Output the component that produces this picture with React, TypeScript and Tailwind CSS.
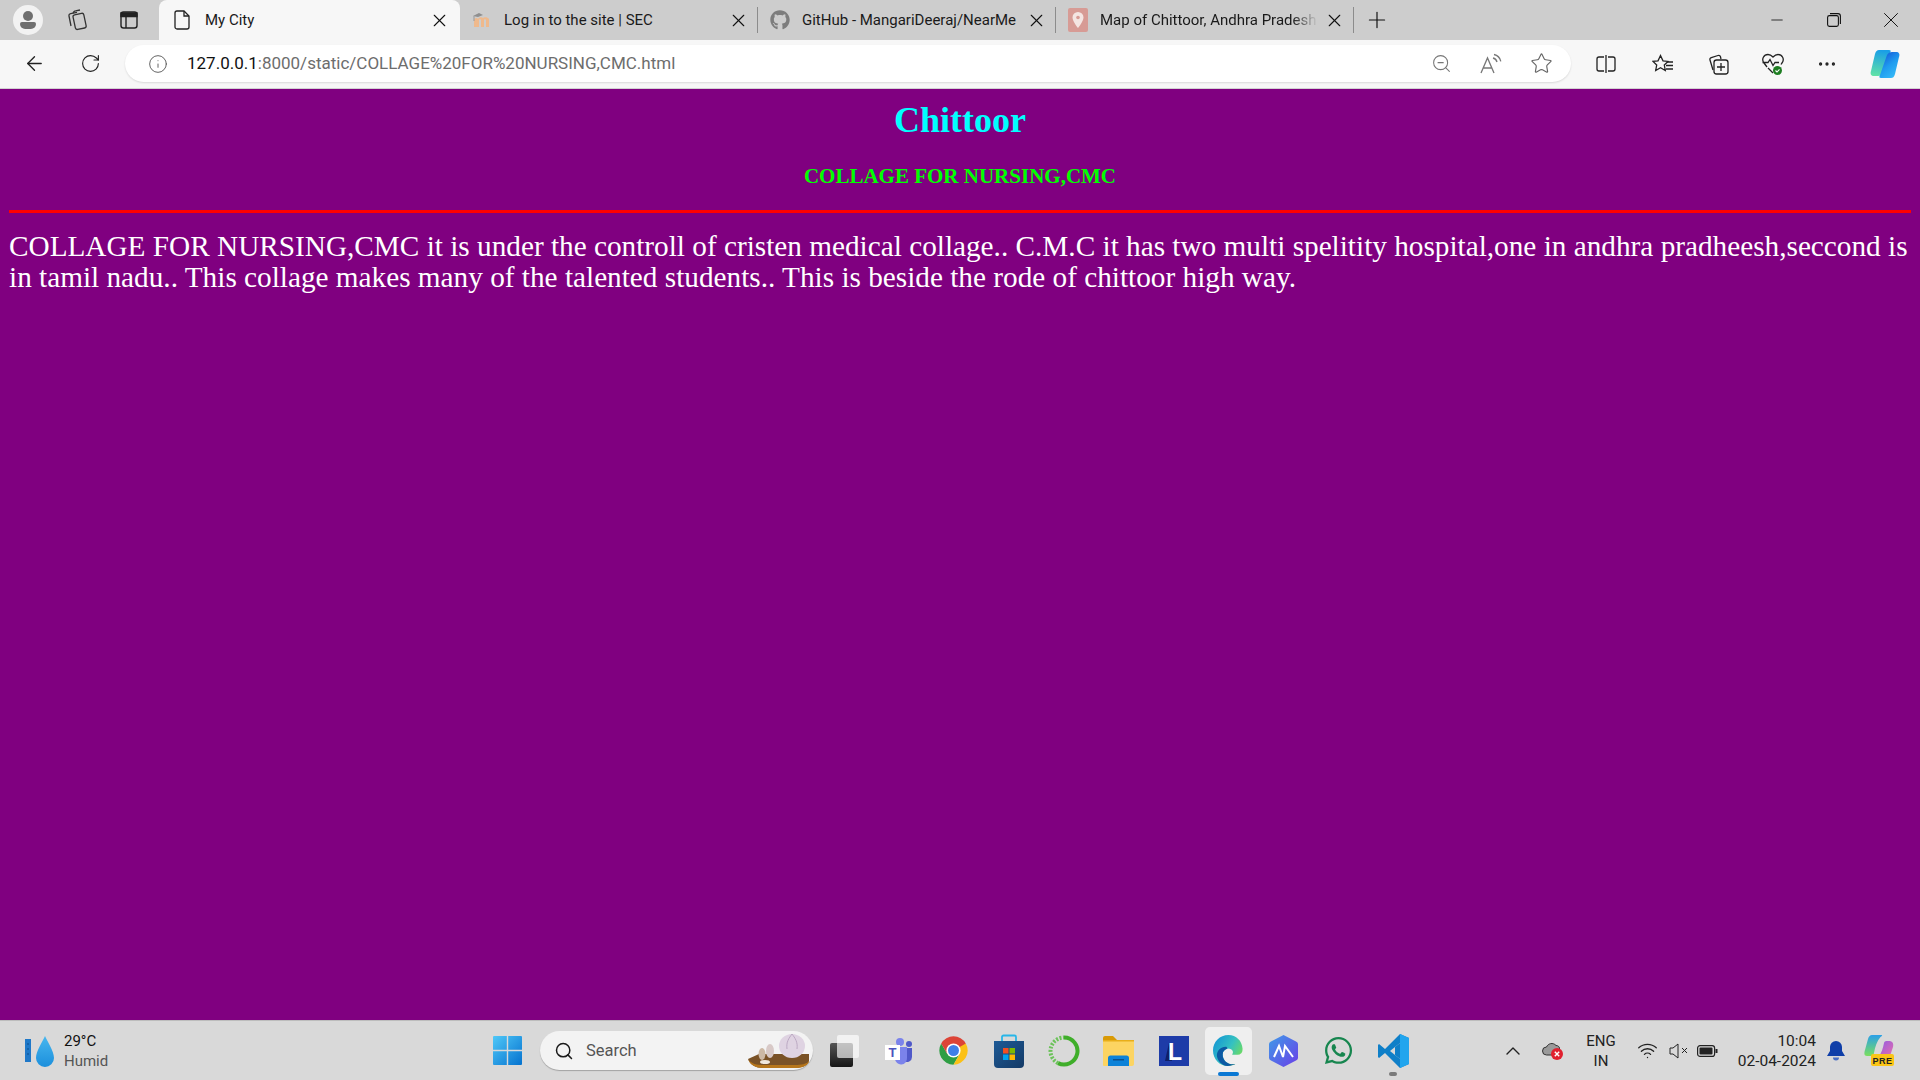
import React from "react";
import { FaGithub, FaWhatsapp } from "react-icons/fa";
import {
  ArrowLeft, RotateCw, Info, ZoomOut, Star, X, Plus, Minus, MoreHorizontal, ChevronUp, Wifi, Search,
} from "lucide-react";

const ui = "font-['Roboto',sans-serif]";

function Workspaces() {
  return (
    <svg width="22" height="24" viewBox="0 0 22 24" fill="none" stroke="#333" strokeWidth="1.3">
      <rect x="8" y="6" width="11" height="15" rx="2" transform="rotate(-12 13 13)" />
      <path d="M5 18 3 8a2 2 0 0 1 1.6-2.4L11 4.4" />
      <path d="M7 5 8 3.6a2 2 0 0 1 1.5-.8L14 2" />
    </svg>
  );
}
function VerticalTabs() {
  return (
    <svg width="20" height="20" viewBox="0 0 20 20" fill="none" stroke="#222" strokeWidth="1.4">
      <rect x="2" y="2" width="16" height="16" rx="2.5" />
      <path d="M2 3h16v3.5H2z" fill="#222" />
      <path d="M7 6v12" />
    </svg>
  );
}
function PageIcon() {
  return (
    <svg width="17" height="20" viewBox="0 0 17 20" fill="none" stroke="#222" strokeWidth="1.3">
      <path d="M3 1h7l5 5v11a2 2 0 0 1-2 2H3a2 2 0 0 1-2-2V3a2 2 0 0 1 2-2Z" />
      <path d="M10 1v5h5" />
    </svg>
  );
}
function Moodle() {
  return (
    <svg width="20" height="18" viewBox="0 0 20 18" fill="none">
      <path d="M2 16V9c0-2 3-3 4-1 1-2 4-2 5-1 1-1 5-1 6 1v8h-3V9c0-1-2-1-2 0v7h-3V9c0-1-2-1-2 0v7H2Z" fill="#efb98c" />
      <path d="M1 5 7 2l4 2-5 2Z" fill="#8f8f8f" />
      <path d="M2 5v5" stroke="#999" />
    </svg>
  );
}
function MapPin() {
  return (
    <svg width="20" height="24" viewBox="0 0 20 24">
      <rect width="20" height="24" rx="2" fill="#d79b95" />
      <path d="M10 4a5.5 5.5 0 0 0-5.5 5.5C4.500 13.500 10 20 10 20s5.500-6.500 5.500-10.500A5.500 5.500 0 0 0 10 4Z" fill="#f4e5e2" />
      <circle cx="10" cy="9.500" r="1.800" fill="#d79b95" />
    </svg>
  );
}
function ReadAloud() {
  return (
    <svg width="24" height="22" viewBox="0 0 24 22" fill="none" stroke="#777" strokeWidth="1.300">
      <path d="M2 20 8.500 5 15 20M4.500 15h8" />
      <path d="M14 5c2 .5 3.500 2 4 4M15 1.500c3.500.8 6 3.300 6.800 6.800" />
    </svg>
  );
}
function SplitScreen() {
  return (
    <svg width="20" height="20" viewBox="0 0 20 20" fill="none" stroke="#222" strokeWidth="1.300">
      <path d="M8 3H3a2 2 0 0 0-2 2v10a2 2 0 0 0 2 2h5M12 3h5a2 2 0 0 1 2 2v10a2 2 0 0 1-2 2h-5" />
      <path d="M10 1v18" />
    </svg>
  );
}
function Favorites() {
  return (
    <svg width="22" height="20" viewBox="0 0 22 20" fill="none" stroke="#222" strokeWidth="1.300">
      <path d="M8.500 1.500 11 6.800l5 .6-3.700 3.600 1 5.500-4.800-2.700-4.800 2.700 1-5.500L1 7.400l5-.6Z" />
      <path d="M15 8h6M14 11.500h7M14 15h7" />
    </svg>
  );
}
function Collections() {
  return (
    <svg width="21" height="22" viewBox="0 0 21 22" fill="none" stroke="#222" strokeWidth="1.300">
      <path d="M5 17 2 7a2 2 0 0 1 1.300-2.400L10 2.500a2 2 0 0 1 2.500 1.300L13 6" />
      <rect x="6" y="7" width="14" height="14" rx="2.500" />
      <path d="M13 10v8M9 14h8" />
    </svg>
  );
}
function Health() {
  return (
    <svg width="24" height="24" viewBox="0 0 24 24" fill="none">
      <path d="M6 15 3 11C0 7 3 2.500 7 2.500c2 0 3.500 1 5 2.500 1.500-1.500 3-2.500 5-2.500 4 0 7 4.500 4 8.500l-1 1.500M1.500 10.500H7l2-3 3 6 2-3h4M7 16l5 5" stroke="#222" strokeWidth="1.300" />
      <circle cx="16.500" cy="18.500" r="4.500" fill="#1e7d22" />
      <path d="m14.500 18.500 1.500 1.500 2.500-2.700" stroke="#fff" strokeWidth="1.100" />
    </svg>
  );
}
function Copilot() {
  return (
    <svg width="30" height="28" viewBox="0 0 30 28">
      <defs>
        <linearGradient id="cpa" x1="0.300" y1="0" x2="0.200" y2="1">
          <stop offset="0" stopColor="#1a9fe6" />
          <stop offset="1" stopColor="#62e3a6" />
        </linearGradient>
        <linearGradient id="cpb" x1="0.200" y1="0" x2="0.800" y2="1">
          <stop offset="0" stopColor="#1556d8" />
          <stop offset="0.500" stopColor="#1f9bef" />
          <stop offset="1" stopColor="#38bdf8" />
        </linearGradient>
      </defs>
      <path d="M9 0h10c2 0 2 1 1 3l-7 20c-1 2-3 3-5 3H4c-3 0-4-2-3-5L5 4c1-3 2-4 4-4Z" fill="url(#cpa)" />
      <path d="M21 28H11c-2 0-2-1-1-3l7-20c1-2 3-3 5-3h4c3 0 4 2 3 5l-4 17c-1 3-2 4-4 4Z" fill="url(#cpb)" />
    </svg>
  );
}
function WeatherIcon() {
  return (
    <svg width="30" height="32" viewBox="0 0 30 32">
      <defs>
        <linearGradient id="drop" x1="0" y1="0" x2="0" y2="1">
          <stop offset="0" stopColor="#47b7ef" />
          <stop offset="1" stopColor="#1c8fdc" />
        </linearGradient>
      </defs>
      <rect x="0" y="4" width="6" height="23" fill="#1f78c8" />
      <path d="M2 9h2M2 14h2M2 19h2" stroke="#0d4c8c" strokeWidth="1" />
      <path d="M20 1c2 5 9 15 9 22a9 9 0 0 1-18 0C11 16 18 6 20 1Z" fill="url(#drop)" />
    </svg>
  );
}
function WindowsLogo() {
  return (
    <svg width="29" height="29" viewBox="0 0 29 29">
      <defs>
        <linearGradient id="win" x1="0" y1="0" x2="1" y2="1">
          <stop offset="0" stopColor="#4fc8f8" />
          <stop offset="1" stopColor="#0572cf" />
        </linearGradient>
      </defs>
      <path d="M0 1a1 1 0 0 1 1-1h12.800v13.800H0ZM15.200 0H28a1 1 0 0 1 1 1v12.800H15.200ZM0 15.200h13.800V29H1a1 1 0 0 1-1-1ZM15.200 15.200H29V28a1 1 0 0 1-1 1H15.200Z" fill="url(#win)" />
    </svg>
  );
}
function Garlic() {
  return (
    <svg width="66" height="36" viewBox="0 0 66 36">
      <path d="M1 26 12 21h50v7c-1 5-8 7-14 7H16C9 35 3 32 1 26Z" fill="#7a5226" />
      <path d="M1 26c3 5 9 6 15 6h32c6 0 12-1 14-4v1c-1 4-8 6-14 6H16C9 35 3 32 1 26Z" fill="#b7761a" />
      <ellipse cx="45" cy="13" rx="13" ry="12" fill="#dfd3e2" />
      <path d="M45 1c-3 4-6 8-5 15M45 1c3 4 6 8 5 15" stroke="#bba8c2" fill="none" />
      <ellipse cx="23" cy="18" rx="4" ry="7" fill="#d8c9c7" />
      <ellipse cx="15" cy="21" rx="3.500" ry="6" fill="#cdb9a5" />
      <ellipse cx="18" cy="29" rx="5" ry="2" fill="#f0e8dc" />
    </svg>
  );
}
function Multitask() {
  return (
    <svg width="30" height="34" viewBox="0 0 30 34">
      <defs>
        <linearGradient id="mt" x1="0" y1="0" x2="0" y2="1">
          <stop offset="0" stopColor="#555" />
          <stop offset="1" stopColor="#161616" />
        </linearGradient>
      </defs>
      <rect x="1" y="9" width="23" height="24" rx="2" fill="url(#mt)" />
      <rect x="8" y="1" width="22" height="23" rx="2" fill="#fff" fillOpacity="0.650" />
    </svg>
  );
}
function Teams() {
  return (
    <svg width="28" height="28" viewBox="0 0 28 28">
      <circle cx="15" cy="5" r="4" fill="#7b83eb" />
      <circle cx="24" cy="7" r="3" fill="#5059c9" />
      <path d="M19 11h8v9a5 5 0 0 1-8 4Z" fill="#5059c9" />
      <path d="M9 10h13v11a6 6 0 0 1-12 1Z" fill="#7b83eb" />
      <rect x="0" y="8" width="15" height="15" fill="#fff" />
      <text x="7.500" y="20" textAnchor="middle" fontFamily="Liberation Sans" fontWeight="700" fontSize="13" fill="#4b53bc">T</text>
    </svg>
  );
}
function Chrome() {
  return (
    <svg width="31" height="31" viewBox="0 0 48 48">
      <path d="M14.500 29.500 4.950 13A22 22 0 0 0 24 46l9.500-16.500Z" fill="#2f9e44" />
      <path d="M24 13h19.050A22 22 0 0 1 24 46l9.500-16.500Z" fill="#fbc116" />
      <path d="M24 24 43.050 13A22 22 0 0 0 4.950 13l9.550 16.500Z" fill="#dc4437" />
      <circle cx="24" cy="24" r="11" fill="#fff" />
      <circle cx="24" cy="24" r="8.500" fill="#3f7fe8" />
    </svg>
  );
}
function Store() {
  return (
    <svg width="30" height="34" viewBox="0 0 30 34">
      <defs>
        <linearGradient id="st" x1="0" y1="0" x2="1" y2="1">
          <stop offset="0" stopColor="#1d5a96" />
          <stop offset="1" stopColor="#143a66" />
        </linearGradient>
      </defs>
      <path d="M8 7V3a1.500 1.500 0 0 1 1.500-1.500h11A1.500 1.500 0 0 1 22 3v4" stroke="#28b6e8" strokeWidth="1.800" fill="none" />
      <path d="M0 7h30v23a4 4 0 0 1-4 4H4a4 4 0 0 1-4-4Z" fill="url(#st)" />
      <rect x="9" y="14" width="5.500" height="5.500" fill="#f25022" />
      <rect x="15.500" y="14" width="5.500" height="5.500" fill="#7fba00" />
      <rect x="9" y="20.500" width="5.500" height="5.500" fill="#00a4ef" />
      <rect x="15.500" y="20.500" width="5.500" height="5.500" fill="#ffb900" />
    </svg>
  );
}
function GreenRing() {
  return (
    <svg width="32" height="32" viewBox="0 0 32 32" fill="none">
      <path d="M16 2.500a13.500 13.500 0 1 1-6 25.600" stroke="#3fae2a" strokeWidth="4" />
      <path d="M10 28.100A13.500 13.500 0 0 1 16 2.500" stroke="#6cc25a" strokeWidth="4" strokeDasharray="2 1.500" />
    </svg>
  );
}
function Folder() {
  return (
    <svg width="31" height="30" viewBox="0 0 31 30">
      <path d="M0 2a2 2 0 0 1 2-2h8l4 4H0Z" fill="#d99a06" />
      <path d="M0 4h29a2 2 0 0 1 2 2v22a2 2 0 0 1-2 2H1a1 1 0 0 1-1-1Z" fill="#fcd462" />
      <path d="M0 4h31v1.500H0Z" fill="#e8ae1a" />
      <path d="M5 30v-8a2.500 2.500 0 0 1 2.500-2.500h16A2.500 2.500 0 0 1 26 22v8Z" fill="#0c82d8" />
      <rect x="10" y="23" width="11" height="1.500" fill="#0a4f8c" />
    </svg>
  );
}
function LApp() {
  return (
    <svg width="30" height="30" viewBox="0 0 30 30">
      <rect width="30" height="30" fill="#1d3ba8" />
      <path d="M10 7 6 25h7Z" fill="#0f1f66" />
      <text x="16" y="24" textAnchor="middle" fontFamily="Liberation Sans" fontWeight="700" fontSize="23" fill="#fff">L</text>
    </svg>
  );
}
function Edge() {
  return (
    <svg width="31" height="31" viewBox="0 0 32 32">
      <defs>
        <linearGradient id="eg" x1="0" y1="0" x2="1" y2="0.600">
          <stop offset="0" stopColor="#0f8fd8" />
          <stop offset="0.600" stopColor="#35c1c1" />
          <stop offset="1" stopColor="#6fdc5e" />
        </linearGradient>
      </defs>
      <path d="M16 0C7 0 0 7 0 16c0 9 7 16 15 16 3.500 0 6-1 8-2-7 1-13-3-13-10 0-3 2-5 5-6 3 0 5 1 5.500 3 .500 2-1 3-1 3s4 1 8 0c3-1 3-4 3-6C30 6 24 0 16 0Z" fill="url(#eg)" />
      <path d="M13 12c-5 0-9 4-9 9 0 5 5 11 11 11 3.500 0 6-1 8-2-7 1-13-3-13-10 0-3 2-5 5-6-.500-1.500-1-2-2-2Z" fill="#0c59a4" />
    </svg>
  );
}
function Arc() {
  return (
    <svg width="29" height="32" viewBox="0 0 29 32">
      <defs>
        <linearGradient id="arc" x1="0" y1="0" x2="1" y2="1">
          <stop offset="0" stopColor="#3f9be8" />
          <stop offset="1" stopColor="#6a3fe8" />
        </linearGradient>
      </defs>
      <path d="M14.500 0 27 6.500a3 3 0 0 1 2 3v13a3 3 0 0 1-2 3L14.500 32 2 25.500a3 3 0 0 1-2-3v-13a3 3 0 0 1 2-3Z" fill="url(#arc)" />
      <path d="m5 22 5-11 4 11M14 22l2-11 8 11" stroke="#fff" strokeWidth="2" fill="none" />
    </svg>
  );
}
function VSCode() {
  return (
    <svg width="31" height="36" viewBox="0 0 31 36">
      <path d="M22 1 31 5v26l-9 4L7 20 1 25l-1-1V12l1-1 6 5Z" fill="#0f7fc8" />
      <path d="M22 1 31 5v26l-9 4Z" fill="#21a5ee" />
      <path d="M22 10 12 18l10 8Z" fill="#d9d9d9" />
      <path d="M22 10v16l-5-4v-8Z" fill="#0f7fc8" />
    </svg>
  );
}
function CloudError() {
  return (
    <svg width="22" height="20" viewBox="0 0 22 20">
      <path d="M4.500 14a4 4 0 0 1 0-8C6 2.500 11 1 14 4.500c2 0 3 1 3.500 2.500v7Z" fill="#9a9a9a" stroke="#333" strokeWidth="1" />
      <circle cx="15" cy="13" r="6" fill="#e0202f" />
      <path d="m12.800 10.800 4.400 4.400m0-4.400-4.400 4.400" stroke="#fff" strokeWidth="1.400" />
    </svg>
  );
}
function Mute() {
  return (
    <svg width="20" height="16" viewBox="0 0 20 16" fill="none" stroke="#222" strokeWidth="1">
      <path d="M1 5h3l5-4v14l-5-4H1Z" />
      <path d="m13 5 5 5m0-5-5 5" />
    </svg>
  );
}
function Battery() {
  return (
    <svg width="21" height="12" viewBox="0 0 21 12">
      <rect x="0.600" y="0.600" width="17" height="10.800" rx="2.500" fill="none" stroke="#222" strokeWidth="1.200" />
      <rect x="2.500" y="2.500" width="13" height="7" rx="1" fill="#222" />
      <rect x="18.500" y="4" width="2" height="4" fill="#222" />
    </svg>
  );
}
function Bell() {
  return (
    <svg width="18" height="20" viewBox="0 0 18 20">
      <path d="M9 0a6 6 0 0 0-6 6v4l-3 5h18l-3-5V6a6 6 0 0 0-6-6Z" fill="#0f3ea8" />
      <path d="M6 16.500h6a3 3 0 0 1-6 0Z" fill="#4a6fc4" />
    </svg>
  );
}
function CopilotPre() {
  return (
    <svg width="30" height="31" viewBox="0 0 30 31">
      <defs>
        <linearGradient id="cq" x1="0" y1="0" x2="0" y2="1">
          <stop offset="0" stopColor="#2a9fe8" />
          <stop offset="1" stopColor="#7adf5e" />
        </linearGradient>
        <linearGradient id="cr" x1="0" y1="0" x2="1" y2="1">
          <stop offset="0" stopColor="#8a5be8" />
          <stop offset="1" stopColor="#ef6fa8" />
        </linearGradient>
      </defs>
      <path d="M8 0h9c2 0 1 1-.500 2C13 6 11 12 10 18c-.500 3-2 3-4 3H3c-3 0-3-3-2-6L4 4c.500-2 2-4 4-4Z" fill="url(#cq)" />
      <path d="M22 24h-8c-2 0-1-1 .500-2 3-4 4.500-9 5.500-14 .500-2 2-2 4-2h1c3 0 5 2 4 6l-3 9c-.500 2-2 3-4 3Z" fill="url(#cr)" />
      <rect x="7" y="19" width="23" height="12" rx="2" fill="#fbc516" />
      <text x="18.500" y="28.500" textAnchor="middle" fontFamily="Liberation Sans" fontWeight="700" fontSize="9" letterSpacing="0.500" fill="#222">PRE</text>
    </svg>
  );
}

type TabData = { title: string; icon: React.ReactNode; active?: boolean; fade?: boolean };
const tabs: TabData[] = [
  { title: "My City", icon: <PageIcon />, active: true },
  { title: "Log in to the site | SEC", icon: <Moodle /> },
  { title: "GitHub - MangariDeeraj/NearMe", icon: <FaGithub size={20} color="#7d7d7d" /> },
  { title: "Map of Chittoor, Andhra Pradesh", icon: <MapPin />, fade: true },
];

function Tab({ tab }: { tab: TabData }) {
  return (
    <div
      className={
        tab.active
          ? "relative z-10 flex h-[40px] w-[301px] shrink-0 items-center rounded-t-lg bg-[#f7f7f7] pl-[13px]"
          : "flex h-[40px] w-[298px] shrink-0 items-center border-r border-[#8c8c8c] [border-image:linear-gradient(to_bottom,transparent_20%,#8c8c8c_20%,#8c8c8c_80%,transparent_80%)_1] pl-[11px]"
      }
    >
      <span className="flex w-[21px] shrink-0 justify-center">{tab.icon}</span>
      <span
        className={
          tab.fade
            ? "ml-[12px] mt-[1px] w-[218px] overflow-hidden whitespace-nowrap text-[15px] text-[#1a1a1a] [mask-image:linear-gradient(to_right,black_88%,transparent)]"
            : "ml-[12px] mt-[1px] w-[218px] overflow-hidden whitespace-nowrap text-[15px] text-[#1a1a1a]"
        }
      >
        {tab.title}
      </span>
      <X size={21} strokeWidth={1.300} color="#111" className="ml-[6px] shrink-0" />
    </div>
  );
}

function Slot({ w, children }: { w: string; children: React.ReactNode }) {
  return <div className={`flex shrink-0 items-center justify-center ${w}`}>{children}</div>;
}

function TaskIcon({ children, active, running }: { children: React.ReactNode; active?: boolean; running?: boolean }) {
  return (
    <div className="relative flex h-[60px] w-[55px] shrink-0 items-center justify-center">
      {active && <div className="absolute left-[4px] top-[6px] h-[48px] w-[47px] rounded-[5px] bg-[#efefef]" />}
      <div className="relative flex">{children}</div>
      {active && <div className="absolute left-[17px] top-[51px] h-[4px] w-[21px] rounded-full bg-[#0a78d4]" />}
      {running && <div className="absolute left-[23px] top-[51px] h-[4px] w-[8px] rounded-full bg-[#7a7a7a]" />}
    </div>
  );
}

export default function App() {
  return (
    <div className={`flex h-[1080px] w-[1920px] flex-col overflow-hidden ${ui}`}>
      <div className="flex h-[40px] shrink-0 items-center bg-[#cdcdcd]">
        <Slot w="w-[55px]">
          <div className="flex h-[30px] w-[30px] flex-col items-center justify-center rounded-full bg-[#f2f2f2]">
            <div className="h-[10px] w-[10px] rounded-full bg-[#6f6f6f]" />
            <div className="mt-[1px] h-[7px] w-[16px] rounded-b-[8px] rounded-t-[3px] bg-[#6f6f6f]" />
          </div>
        </Slot>
        <Slot w="w-[44px]"><Workspaces /></Slot>
        <Slot w="w-[60px]"><VerticalTabs /></Slot>
        {tabs.map((t) => (
          <Tab key={t.title} tab={t} />
        ))}
        <Slot w="w-[46px]"><Plus size={26} strokeWidth={1.100} color="#111" /></Slot>
        <div className="flex-1" />
        <Slot w="w-[57px]"><Minus size={18} strokeWidth={1.100} color="#111" /></Slot>
        <Slot w="w-[57px]">
          <svg width="14" height="14" viewBox="0 0 14 14" fill="none" stroke="#111" strokeWidth="1.100">
            <rect x="0.600" y="2.600" width="10.800" height="10.800" rx="1.800" />
            <path d="M3 .6h8a2.400 2.400 0 0 1 2.400 2.400v8" />
          </svg>
        </Slot>
        <Slot w="w-[58px]"><X size={26} strokeWidth={0.900} color="#111" /></Slot>
      </div>

      <div className="flex h-[49px] shrink-0 items-center border-b border-[#d2d2d2] bg-[#f7f7f7] pb-[1px]">
        <Slot w="w-[68px]"><ArrowLeft size={23} strokeWidth={1.400} color="#222" /></Slot>
        <Slot w="w-[44px]"><RotateCw size={21} strokeWidth={1.300} color="#222" /></Slot>
        <div className="ml-[13px] flex h-[37px] w-[1446px] shrink-0 items-center rounded-full bg-white pl-[23px] pr-[5px] shadow-[0_1px_2px_rgba(0,0,0,0.120)]">
          <Info size={20} strokeWidth={1.100} color="#555" className="shrink-0" />
          <span className="ml-[19px] mt-[1px] whitespace-nowrap text-[17px] text-[#111]">
            127.0.0.1<span className="text-[#6d6d6d]">:8000/static/COLLAGE%20FOR%20NURSING,CMC.html</span>
          </span>
          <div className="flex-1" />
          <Slot w="w-[50px]"><ZoomOut size={21} strokeWidth={1.200} color="#777" /></Slot>
          <Slot w="w-[50px]"><ReadAloud /></Slot>
          <Slot w="w-[50px]"><Star size={23} strokeWidth={1.200} color="#666" /></Slot>
        </div>
        <Slot w="w-[70px]"><SplitScreen /></Slot>
        <Slot w="w-[44px]"><Favorites /></Slot>
        <Slot w="w-[66px]"><Collections /></Slot>
        <Slot w="w-[44px]"><Health /></Slot>
        <Slot w="w-[64px]"><MoreHorizontal size={22} strokeWidth={1.600} color="#222" /></Slot>
        <Slot w="w-[52px]"><Copilot /></Slot>
      </div>

      <div className="flex-1 bg-[#800080] px-[9px] font-['Liberation_Serif',serif]">
        <h1 className="mt-[11px] text-center text-[36px] font-bold leading-[40px] text-[#00ffff]">Chittoor</h1>
        <h2 className="mt-[23px] text-center text-[21px] font-bold leading-[26px] text-[#00ff00]">COLLAGE FOR NURSING,CMC</h2>
        <hr className="mt-[21px] h-[3px] border-0 bg-[#ff0000]" />
        <p className="mt-[18px] text-[29.250px] leading-[31px] text-white">
          COLLAGE FOR NURSING,CMC it is under the controll of cristen medical collage.. C.M.C it has two multi spelitity hospital,one in andhra pradheesh,seccond is in tamil nadu.. This collage makes many of the talented students.. This is beside the rode of chittoor high way.
        </p>
      </div>

      <div className="flex h-[60px] shrink-0 items-center border-t border-[#bdbdbd] bg-[#d9d9d9]">
        <div className="flex w-[480px] shrink-0 items-center pl-[25px]">
          <WeatherIcon />
          <div className="ml-[9px] flex flex-col text-[15px] leading-[20px]">
            <span className="text-[#111]">29°C</span>
            <span className="text-[#555]">Humid</span>
          </div>
        </div>
        <TaskIcon><WindowsLogo /></TaskIcon>
        <div className="ml-[5px] mr-[3px] flex h-[39px] w-[273px] shrink-0 items-center overflow-hidden rounded-full bg-[#f3f3f3] pl-[14px] shadow-[0_1px_1px_rgba(0,0,0,0.250)]">
          <Search size={20} strokeWidth={1.800} color="#1a1a1a" className="shrink-0" />
          <span className="ml-[12px] mt-[1px] text-[16.500px] text-[#555]">Search</span>
          <div className="flex-1" />
          <Garlic />
        </div>
        <TaskIcon><Multitask /></TaskIcon>
        <TaskIcon><Teams /></TaskIcon>
        <TaskIcon><Chrome /></TaskIcon>
        <TaskIcon><Store /></TaskIcon>
        <TaskIcon><GreenRing /></TaskIcon>
        <TaskIcon><Folder /></TaskIcon>
        <TaskIcon><LApp /></TaskIcon>
        <TaskIcon active><Edge /></TaskIcon>
        <TaskIcon><Arc /></TaskIcon>
        <TaskIcon><FaWhatsapp size={31} color="#17864f" /></TaskIcon>
        <TaskIcon running><VSCode /></TaskIcon>
        <div className="w-[72px] shrink-0" />
        <Slot w="w-[40px]"><ChevronUp size={24} strokeWidth={1.400} color="#222" /></Slot>
        <Slot w="w-[40px]"><CloudError /></Slot>
        <div className="flex w-[56px] shrink-0 flex-col items-center text-[15px] leading-[20px] text-[#222]">
          <span>ENG</span>
          <span>IN</span>
        </div>
        <Slot w="w-[37px]"><Wifi size={21} strokeWidth={1.500} color="#222" /></Slot>
        <Slot w="w-[25px]"><Mute /></Slot>
        <Slot w="w-[33px]"><Battery /></Slot>
        <div className="flex w-[92px] shrink-0 flex-col items-end text-[15.500px] leading-[20px] text-[#222]">
          <span>10:04</span>
          <span>02-04-2024</span>
        </div>
        <Slot w="w-[39px]"><Bell /></Slot>
        <Slot w="w-[48px]"><CopilotPre /></Slot>
      </div>
    </div>
  );
}
